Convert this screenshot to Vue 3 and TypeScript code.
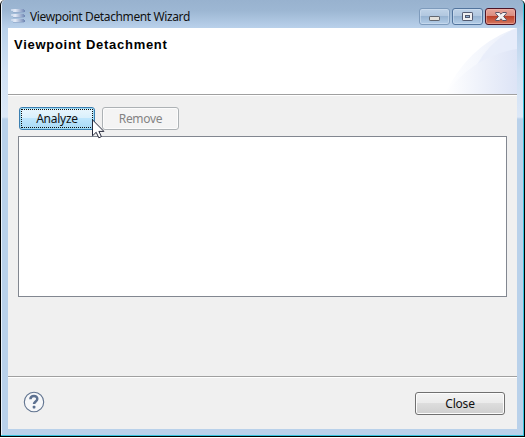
<script setup lang="ts">
import { ref } from 'vue'

const title = ref<string>('Viewpoint Detachment Wizard')
const heading = ref<string>('Viewpoint Detachment')
</script>

<template>
  <div class="window">
    <header class="titlebar">
      <svg class="app-icon" width="14" height="14" viewBox="0 0 14 14">
        <defs>
          <linearGradient id="bar" gradientUnits="userSpaceOnUse" x1="0" x2="14" y1="0" y2="0">
            <stop offset="0" stop-color="#c3d2e8" />
            <stop offset=".3" stop-color="#e4ebf7" />
            <stop offset="1" stop-color="#6c84b2" />
          </linearGradient>
        </defs>
        <path d="M0 0h13v1h1v2H2V2H0zM0 5h13v1h1v2H2V7H0zM0 10h13v1h1v2H2v-1H0z" fill="url(#bar)" />
        <path d="M2 3.500h11M2 8.500h11M2 13.500h11" stroke="#8ea6c9" opacity=".6" />
      </svg>
      <span class="title">{{ title }}</span>
      <div class="controls">
        <button class="ctl min" aria-label="Minimize">
          <svg width="11" height="5" viewBox="0 0 11 5"><rect x=".5" y=".5" width="10" height="4" rx=".6" fill="#e3e1dc" stroke="#61666f" /></svg>
        </button>
        <button class="ctl max" aria-label="Maximize">
          <svg width="11" height="9" viewBox="0 0 11 9">
            <rect x=".5" y=".5" width="10" height="8" rx=".6" fill="#f0f0f1" stroke="#535a70" />
            <rect x="3.5" y="3.5" width="4" height="2" fill="#91b0d0" stroke="#535a70" />
          </svg>
        </button>
        <button class="ctl close" aria-label="Close window">
          <svg width="12" height="9" viewBox="0 0 12 9">
            <path d="M.7.5h3.600L6 2.200 7.700.5h3.600v1L8.600 4.500l2.700 3v1H7.700L6 6.800 4.300 8.500H.7v-1l2.700-3L.7 1.500z" fill="#f2f2f2" stroke="#5b5364" />
          </svg>
        </button>
      </div>
    </header>

    <main class="client">
      <section class="banner">
        <h1>{{ heading }}</h1>
        <svg class="swoosh" width="77" height="66" viewBox="0 0 77 66">
          <defs>
            <linearGradient id="outer" x1="0" x2="1" y1="0" y2="0">
              <stop offset="0" stop-color="#fff" />
              <stop offset="1" stop-color="#e9eefa" />
            </linearGradient>
            <linearGradient id="inner" x1="0" x2="1" y1="0" y2="0">
              <stop offset="0" stop-color="#fff" />
              <stop offset="1" stop-color="#dde4f6" />
            </linearGradient>
          </defs>
          <path d="M5 66Q29 16 77 0V66z" fill="url(#outer)" />
          <path d="M36 38Q50 12 77 0V28z" fill="#e5ebf9" opacity=".7" />
          <path d="M5 66Q34 28 77 21V66z" fill="url(#inner)" />
        </svg>
      </section>

      <section class="body">
        <div class="actions">
          <button class="btn focused"><span>Analyze</span></button>
          <button class="btn disabled" disabled><span>Remove</span></button>
          <svg class="cursor" width="13" height="20" viewBox="0 0 13 20">
            <path d="M.5.8v16l3.700-3.500 2.600 5.500 2.600-1.200-2.500-5.200h5z" fill="#fff" stroke="#25283a" />
          </svg>
        </div>
        <div class="results"></div>
      </section>

      <footer class="footer">
        <svg class="help" width="22" height="22" viewBox="0 0 22 22">
          <circle cx="11" cy="11" r="9.700" fill="#f6f7f9" stroke="#60738f" stroke-width="1.100" />
          <path d="M7.400 8.300C7.500 3.900 14.500 4 14.300 8c-.1 2.400-3.300 2.500-3.300 5.100" fill="none" stroke="#5d7190" stroke-width="2.500" />
          <rect x="9.700" y="14.700" width="2.700" height="2.700" rx=".7" fill="#5d7190" />
        </svg>
        <button class="btn close-btn"><span>Close</span></button>
      </footer>
    </main>
  </div>
</template>

<style>
body {
  background: #fff;
  overflow: hidden;
}
</style>

<style scoped>
* {
  box-sizing: border-box;
}
.window {
  width: 525px;
  height: 437px;
  padding: 0 6px 6px 7px;
  border: solid #000;
  border-width: 0 1px 1px;
  border-radius: 5px 5px 0 0;
  background: linear-gradient(#9bb4d1 0, #b9d1ea 28px, #d0e1f4 70px, #dce8f7 117px, #b9d1ea 119px);
  box-shadow: inset -1px -1px #35c3dd, inset 1px 0 #e9f2fb;
  font-family: "Noto Sans", "Open Sans", sans-serif;
  font-size: 12px;
  color: #111;
}
.titlebar {
  display: flex;
  height: 28px;
  margin: 0 -5px 0 -6px;
  padding: 0 7px 0 9px;
  background: linear-gradient(#98b2cf 0, #9db7d3 11px, #b9d1eb 28px);
  border-radius: 5px 5px 0 0;
}
.app-icon {
  flex: none;
  margin-top: 9px;
}
.title {
  flex: 1;
  margin-left: 5px;
  line-height: 33px;
  white-space: nowrap;
  letter-spacing: -.38px;
}
.controls {
  display: flex;
  gap: 2px;
  padding-top: 8px;
}
.ctl {
  display: flex;
  align-items: center;
  justify-content: center;
  width: 31px;
  height: 17px;
  padding: 0;
  border: 1px solid #52749d;
  border-radius: 3px;
  background: linear-gradient(#c0d3e8 0, #b1c7df 47%, #98b4d2 50%, #b4cee8 100%);
  box-shadow: inset 0 0 0 1px #d5e4f480;
}
.ctl svg {
  flex: none;
}
.min {
  border-color: #7e9bbc;
}
.min svg {
  margin-top: 4px;
}
.close {
  border-color: #4c1426;
  background: linear-gradient(#e8a69b 0, #d98b7e 47%, #bd4129 50%, #d57760 100%);
  box-shadow: inset 0 0 0 1px #f1b5ab90;
}
.client {
  width: 509px;
  height: 401px;
  display: flex;
  flex-direction: column;
  background: #f0f0f0;
}
.banner {
  display: flex;
  justify-content: space-between;
  height: 67px;
  background: #fff;
  border-bottom: 1px solid #a0a0a0;
  box-shadow: 0 1px #fff;
}
h1 {
  margin: 9px 0 0 6px;
  font: bold 13px/15px "Liberation Sans", Arial, sans-serif;
  letter-spacing: .72px;
  color: #000;
}
.body {
  flex: 1;
  padding: 12px 10px 0;
}
.actions {
  position: relative;
  display: flex;
  gap: 7px;
  padding-left: 1px;
}
.btn {
  height: 23px;
  width: 77px;
  padding: 0;
  border: 1px solid #707070;
  border-radius: 3px;
  background: linear-gradient(#f3f3f3 0, #ebebeb 48%, #dddddd 50%, #cfcfcf 100%);
  box-shadow: inset 0 0 0 1px #fcfcfc;
  font: inherit;
  line-height: 21px;
  color: #111;
}
.focused {
  width: 76px;
  padding: 1px;
  border-color: #3c7fb1;
  background: linear-gradient(#eaf6fd 0, #d9f0fc 48%, #bee6fd 50%, #a7d9f5 100%);
  box-shadow: inset 0 0 0 1px #9edcf5;
  letter-spacing: -.25px;
}
.focused span {
  display: block;
  height: 19px;
  border: 1px dotted #111;
  line-height: 17px;
}
.disabled {
  border-color: #adb2b5;
  background: #f4f4f4;
  color: #838383;
  letter-spacing: -.3px;
}
.cursor {
  position: absolute;
  left: 74px;
  top: 12px;
}
.results {
  height: 161px;
  margin-top: 6px;
  border: 1px solid #828790;
  background: #fff;
}
.footer {
  display: flex;
  justify-content: space-between;
  height: 53px;
  padding: 15px 12px 0 15px;
  border-top: 1px solid #a0a0a0;
  box-shadow: inset 0 1px #fff;
}
.help {
  margin-top: -1px;
}
.close-btn {
  width: 90px;
  letter-spacing: -.2px;
}
</style>
